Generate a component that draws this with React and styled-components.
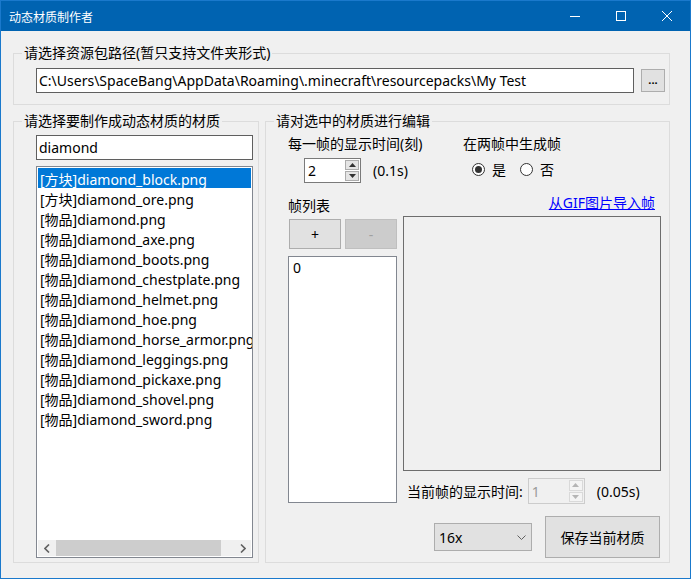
import styled, { createGlobalStyle } from 'styled-components';

const GlobalStyle = createGlobalStyle`
  * { box-sizing: border-box; }
  body {
    margin: 0;
    background: #f0f0f0;
    font-family: "Noto Sans", "Noto Sans CJK SC", sans-serif;
    font-size: 14px;
    color: #000;
  }
`;

const files = [
  '[方块]diamond_block.png',
  '[方块]diamond_ore.png',
  '[物品]diamond.png',
  '[物品]diamond_axe.png',
  '[物品]diamond_boots.png',
  '[物品]diamond_chestplate.png',
  '[物品]diamond_helmet.png',
  '[物品]diamond_hoe.png',
  '[物品]diamond_horse_armor.png',
  '[物品]diamond_leggings.png',
  '[物品]diamond_pickaxe.png',
  '[物品]diamond_shovel.png',
  '[物品]diamond_sword.png',
];

const Window = styled.div`
  width: 691px;
  height: 579px;
  border: 1px solid #1a79cc;
  background: #f0f0f0;
  display: flex;
  flex-direction: column;
  overflow: hidden;
`;

const TitleBar = styled.div`
  height: 30px;
  flex-shrink: 0;
  background: #0063b1;
  color: #fff;
  display: flex;
  align-items: center;
  padding-left: 8px;
  font-size: 12px;
  .title {
    flex: 1;
    font-family: "Noto Sans CJK SC", sans-serif;
  }
`;

const CaptionButton = styled.div`
  width: 46px;
  height: 30px;
  display: flex;
  align-items: center;
  justify-content: center;
`;

const Body = styled.div`
  flex: 1;
  display: flex;
  flex-direction: column;
  gap: 7px;
  padding: 13px 20px 15px 12px;
`;

const Group = styled.fieldset`
  margin: 0;
  padding: 0;
  border: 1px solid #dcdcdc;
  min-width: 0;
  display: flex;
  flex-direction: column;
  width: ${(p) => (p.$width ? `${p.$width}px` : 'auto')};
  flex: ${(p) => (p.$grow ? 1 : 'none')};
  legend {
    margin-left: 8px;
    padding: 0 2px;
    line-height: 18px;
    font-size: 14px;
  }
`;

const GroupInner = styled.div`
  flex: 1;
  display: flex;
  flex-direction: ${(p) => (p.$row ? 'row' : 'column')};
  padding: ${(p) => p.$pad};
  min-height: 0;
`;

const TextBox = styled.div`
  height: 25px;
  border: 1px solid #5f5f5f;
  background: #fff;
  display: flex;
  align-items: center;
  padding-left: 2px;
  white-space: nowrap;
  overflow: hidden;
  flex: ${(p) => (p.$grow ? 1 : 'none')};
`;

const SmallButton = styled.div`
  width: 24px;
  height: 23px;
  margin-left: 7px;
  margin-top: 1px;
  background: #e1e1e1;
  border: 1px solid #adadad;
  display: flex;
  align-items: center;
  justify-content: center;
  font-size: 11px;
  font-weight: bold;
  line-height: 1;
  padding-bottom: 2px;
`;

const LowerRow = styled.div`
  flex: 1;
  display: flex;
  gap: 6px;
  min-height: 0;
`;

const ListBox = styled.div`
  flex: 1;
  margin-top: 6px;
  border: 1px solid #828790;
  background: #fff;
  display: flex;
  flex-direction: column;
  padding: 1px 0 0 1px;
  min-height: 0;
`;

const Items = styled.div`
  flex: 1;
  overflow: hidden;
`;

const Item = styled.div`
  height: 20px;
  line-height: 20px;
  padding: 2px 0 0 2px;
  margin-right: 1px;
  white-space: nowrap;
  background: ${(p) => (p.$selected ? '#0078d7' : 'transparent')};
  color: ${(p) => (p.$selected ? '#fff' : '#000')};
`;

const HScroll = styled.div`
  height: 16px;
  margin: 0 1px 1px 0;
  background: #f0f0f0;
  display: flex;
  align-items: stretch;
  .arrow {
    width: 17px;
    display: flex;
    align-items: center;
    justify-content: center;
  }
  .track {
    flex: 1;
    display: flex;
    padding-right: 13px;
  }
  .thumb {
    width: 165px;
    background: #cdcdcd;
    margin-left: 1px;
  }
`;

const TopRow = styled.div`
  display: flex;
`;

const Column = styled.div`
  display: flex;
  flex-direction: column;
  width: ${(p) => (p.$width ? `${p.$width}px` : 'auto')};
  flex: ${(p) => (p.$grow ? 1 : 'none')};
  margin-left: ${(p) => p.$ml || 0}px;
`;

const Label = styled.div`
  line-height: ${(p) => p.$lh || 18}px;
  white-space: nowrap;
`;

const SpinRow = styled.div`
  display: flex;
  align-items: center;
  margin-top: ${(p) => p.$mt || 0}px;
  padding-left: ${(p) => p.$pl || 0}px;
  gap: ${(p) => p.$gap || 12}px;
`;

const Spin = styled.div`
  width: ${(p) => p.$width}px;
  height: ${(p) => p.$height}px;
  border: 1px solid ${(p) => (p.$disabled ? '#cccccc' : '#7a7a7a')};
  background: ${(p) => (p.$disabled ? '#f0f0f0' : '#fff')};
  color: ${(p) => (p.$disabled ? '#9a9a9a' : '#000')};
  display: flex;
  .value {
    flex: 1;
    padding-left: 3px;
    display: flex;
    align-items: center;
  }
  .buttons {
    width: 15px;
    display: flex;
    flex-direction: column;
    gap: 1px;
    padding: 1px 1px 1px 0;
  }
`;

const SpinButton = styled.div`
  flex: 1;
  background: ${(p) => (p.$disabled ? '#f4f4f4' : '#e5e5e5')};
  border: 1px solid ${(p) => (p.$disabled ? '#d9d9d9' : '#acacac')};
  display: flex;
  align-items: center;
  justify-content: center;
`;

const RadioRow = styled.div`
  display: flex;
  align-items: center;
  margin-top: 7px;
  padding-left: 9px;
  height: 18px;
`;

const Radio = styled.div`
  display: flex;
  align-items: center;
  margin-right: 14px;
  .circle {
    width: 13px;
    height: 13px;
    border-radius: 50%;
    border: 1px solid #333;
    background: #fff;
    display: flex;
    align-items: center;
    justify-content: center;
    margin-right: 7px;
  }
  .dot {
    width: 7px;
    height: 7px;
    border-radius: 50%;
    background: #333;
  }
`;

const MainRow = styled.div`
  flex: 1;
  display: flex;
  margin-top: 11px;
  min-height: 0;
`;

const ButtonPair = styled.div`
  display: flex;
  gap: 4px;
  margin: 1px 0 0 1px;
`;

const PushButton = styled.div`
  width: ${(p) => p.$width}px;
  height: ${(p) => p.$height}px;
  background: ${(p) => (p.$disabled ? '#cccccc' : '#e1e1e1')};
  border: 1px solid ${(p) => (p.$disabled ? '#bfbfbf' : '#adadad')};
  color: ${(p) => (p.$disabled ? '#a0a0a0' : '#000')};
  display: flex;
  align-items: center;
  justify-content: center;
`;

const FrameList = styled.div`
  height: 247px;
  margin-top: 7px;
  border: 1px solid #828790;
  background: #fff;
  padding: 1px 0 0 4px;
  line-height: 20px;
`;

const LinkRow = styled.div`
  height: 18px;
  line-height: 18px;
  text-align: right;
  padding-right: 6px;
  a {
    color: #0000ff;
    text-decoration: underline;
  }
`;

const Preview = styled.div`
  height: 255px;
  margin-top: 4px;
  border: 1px solid #6d6d6d;
  background: #f0f0f0;
`;

const BottomRow = styled.div`
  margin-top: auto;
  display: flex;
  align-items: center;
  justify-content: flex-end;
  gap: 13px;
  padding-right: 1px;
`;

const Combo = styled.div`
  width: 98px;
  height: 28px;
  background: #e1e1e1;
  border: 1px solid #adadad;
  display: flex;
  align-items: center;
  justify-content: space-between;
  padding: 0 5px 0 4px;
`;

const Up = ({ color }) => (
  <svg width="7" height="4" viewBox="0 0 7 4">
    <path d="M0 4 L3.5 0 L7 4 Z" fill={color} />
  </svg>
);

const Down = ({ color }) => (
  <svg width="7" height="4" viewBox="0 0 7 4">
    <path d="M0 0 L3.5 4 L7 0 Z" fill={color} />
  </svg>
);

const NumericUpDown = ({ value, width, height, disabled }) => {
  const c = disabled ? '#b5b5b5' : '#333';
  return (
    <Spin $width={width} $height={height} $disabled={disabled}>
      <div className="value">{value}</div>
      <div className="buttons">
        <SpinButton $disabled={disabled}><Up color={c} /></SpinButton>
        <SpinButton $disabled={disabled}><Down color={c} /></SpinButton>
      </div>
    </Spin>
  );
};

const App = () => {
  return (
    <>
      <GlobalStyle />
      <Window>
        <TitleBar>
          <span className="title">动态材质制作者</span>
          <CaptionButton>
            <svg width="10" height="10" viewBox="0 0 10 10">
              <path d="M0 5.5 H10" stroke="#fff" strokeWidth="1" />
            </svg>
          </CaptionButton>
          <CaptionButton>
            <svg width="10" height="10" viewBox="0 0 10 10">
              <rect x="0.5" y="0.5" width="9" height="9" fill="none" stroke="#fff" strokeWidth="1" />
            </svg>
          </CaptionButton>
          <CaptionButton>
            <svg width="10" height="10" viewBox="0 0 10 10">
              <path d="M0 0 L10 10 M10 0 L0 10" stroke="#fff" strokeWidth="1" />
            </svg>
          </CaptionButton>
        </TitleBar>

        <Body>
          <Group>
            <legend>请选择资源包路径(暂只支持文件夹形式)</legend>
            <GroupInner $row $pad="6px 4px 11px 22px">
              <TextBox $grow>C:\Users\SpaceBang\AppData\Roaming\.minecraft\resourcepacks\My Test</TextBox>
              <SmallButton>...</SmallButton>
            </GroupInner>
          </Group>

          <LowerRow>
            <Group $width={246}>
              <legend>请选择要制作成动态材质的材质</legend>
              <GroupInner $pad="5px 5px 4px 22px">
                <TextBox>diamond</TextBox>
                <ListBox>
                  <Items>
                    {files.map((f, i) => (
                      <Item key={f} $selected={i === 0}>{f}</Item>
                    ))}
                  </Items>
                  <HScroll>
                    <div className="arrow">
                      <svg width="6" height="9" viewBox="0 0 6 9">
                        <path d="M5 0.5 L1 4.5 L5 8.5" fill="none" stroke="#606060" strokeWidth="1.6" />
                      </svg>
                    </div>
                    <div className="track"><div className="thumb" /></div>
                    <div className="arrow">
                      <svg width="6" height="9" viewBox="0 0 6 9">
                        <path d="M1 0.5 L5 4.5 L1 8.5" fill="none" stroke="#606060" strokeWidth="1.6" />
                      </svg>
                    </div>
                  </HScroll>
                </ListBox>
              </GroupInner>
            </Group>

            <Group $grow>
              <legend>请对选中的材质进行编辑</legend>
              <GroupInner $pad="5px 8px 4px 22px">
                <TopRow>
                  <Column $width={175}>
                    <Label>每一帧的显示时间(刻)</Label>
                    <SpinRow $mt={5} $pl={16} $gap={12}>
                      <NumericUpDown value="2" width={57} height={25} />
                      <span>(0.1s)</span>
                    </SpinRow>
                  </Column>
                  <Column $grow>
                    <Label>在两帧中生成帧</Label>
                    <RadioRow>
                      <Radio>
                        <span className="circle"><span className="dot" /></span>
                        <span>是</span>
                      </Radio>
                      <Radio>
                        <span className="circle" />
                        <span>否</span>
                      </Radio>
                    </RadioRow>
                  </Column>
                </TopRow>

                <MainRow>
                  <Column $width={109}>
                    <Label $lh={24}>帧列表</Label>
                    <ButtonPair>
                      <PushButton $width={52} $height={30}>+</PushButton>
                      <PushButton $width={52} $height={30} $disabled>-</PushButton>
                    </ButtonPair>
                    <FrameList>0</FrameList>
                  </Column>
                  <Column $grow $ml={6}>
                    <LinkRow><a>从GIF图片导入帧</a></LinkRow>
                    <Preview />
                    <SpinRow $mt={7} $pl={4} $gap={5}>
                      <span>当前帧的显示时间:</span>
                      <NumericUpDown value="1" width={57} height={26} disabled />
                      <span style={{ marginLeft: 7 }}>(0.05s)</span>
                    </SpinRow>
                    <BottomRow>
                      <Combo>
                        <span>16x</span>
                        <svg width="9" height="5" viewBox="0 0 9 5">
                          <path d="M0.5 0.5 L4.5 4.5 L8.5 0.5" fill="none" stroke="#606060" strokeWidth="1" />
                        </svg>
                      </Combo>
                      <PushButton $width={115} $height={42}>保存当前材质</PushButton>
                    </BottomRow>
                  </Column>
                </MainRow>
              </GroupInner>
            </Group>
          </LowerRow>
        </Body>
      </Window>
    </>
  );
};

export default App;
